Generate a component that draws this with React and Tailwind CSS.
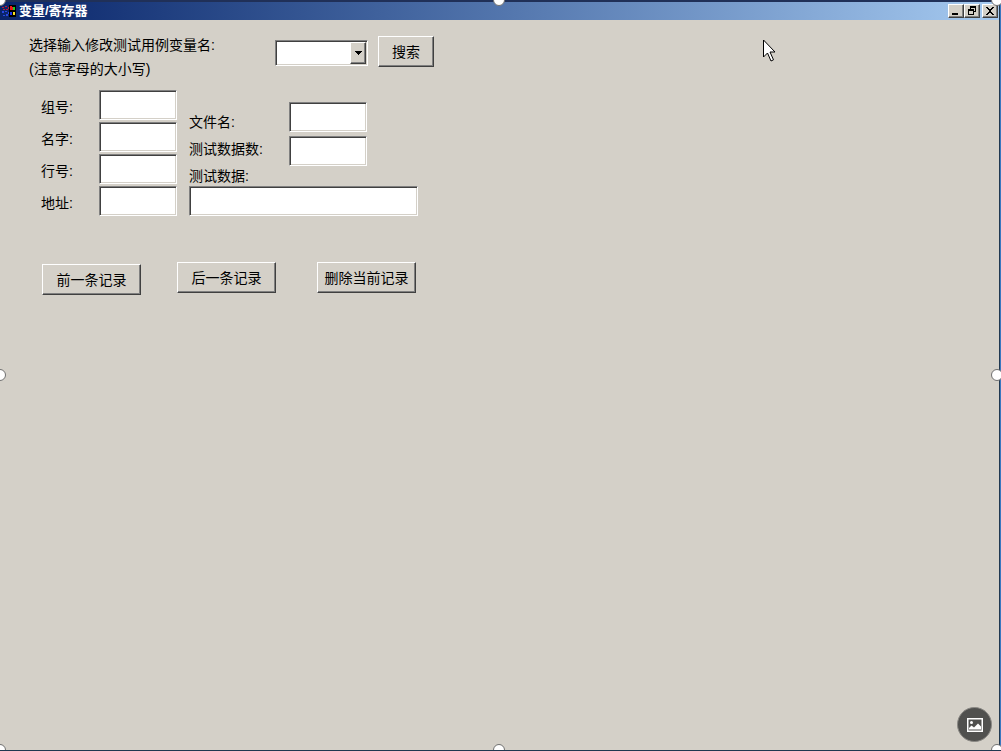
import React, { useState } from 'react';

const RAISED = 'bg-[#d4d0c8] border border-t-white border-l-white border-r-[#404040] border-b-[#404040] shadow-[inset_-1px_-1px_0_#808080]';
const SUNKEN = 'bg-white border border-t-[#808080] border-l-[#808080] border-r-white border-b-white shadow-[inset_1px_1px_0_#404040,inset_-1px_-1px_0_#d4d0c8] outline-none';

const HANDLES = [
  'left-0 top-0',
  'left-[calc(50%-2px)] top-0',
  'left-[calc(100%-4px)] top-0',
  'left-0 top-1/2',
  'left-[calc(50%-2px)] top-full',
  'left-[calc(100%-4px)] top-1/2',
  'left-0 top-full',
  'left-[calc(100%-4px)] top-full',
];

const RECORD_FIELDS = [
  { id: 'group', label: '组号:' },
  { id: 'name', label: '名字:' },
  { id: 'line', label: '行号:' },
  { id: 'address', label: '地址:' },
];

const AppIcon = () => (
  <svg width="16" height="14" viewBox="0 0 16 14" shapeRendering="crispEdges" aria-hidden="true">
    <path d="M9 1h7v12H9z" fill="#000" />
    <path d="M10 2h2v1h1v3h-3z" fill="#f01818" />
    <path d="M13 3h2v3h-2z" fill="#18d028" />
    <path d="M10 8h2v3h-2z" fill="#2038f0" />
    <path d="M13 8h2v3h-2z" fill="#f8e020" />
    <path d="M2 3h2v1H2zM5 2h2v1H5zM8 3h1v2H8zM3 5h2v1H3zM6 5h2v1H6z" fill="#c01830" />
    <path d="M2 7h2v2H2zM5 7h2v1H5zM8 8h1v2H8zM3 11h2v1H3zM6 10h2v2H6z" fill="#2848e0" />
  </svg>
);

const CaptionButton = ({ label, className = '', children }) => (
  <button type="button" aria-label={label} className={`flex h-[14px] w-4 items-center justify-center ${RAISED} ${className}`}>
    <svg width="10" height="10" viewBox="0 0 10 10" shapeRendering="crispEdges">
      {children}
    </svg>
  </button>
);

const TitleBar = () => (
  <header className="flex h-5 items-center border-t-2 border-[#203058] bg-linear-to-r from-[#0a246a] to-[#a6caf0] pr-px">
    <AppIcon />
    <h1 className="ml-[3px] flex-1 text-[13px] font-bold text-white">变量/寄存器</h1>
    <CaptionButton label="最小化">
      <path d="M1 7h6v2H1z" fill="#000" />
    </CaptionButton>
    <CaptionButton label="还原">
      <path d="M3 0h6v6H7V5h1V2H4v1H3zM1 3h6v6H1zM2 5v3h4V5z" fill="#000" fillRule="evenodd" />
    </CaptionButton>
    <CaptionButton label="关闭" className="ml-[2px]">
      <path d="M1 1h2v1h1v1h2V2h1V1h2v1H8v1H7v1H6v2h1v1h1v1h1v1H7V8H6V7H4v1H3v1H1V8h1V7h1V6h1V4H3V3H2V2H1z" fill="#000" />
    </CaptionButton>
  </header>
);

const ActionButton = ({ className = '', children }) => (
  <button type="button" className={`h-[31px] w-[99px] ${RAISED} ${className}`}>
    {children}
  </button>
);

const Cursor = () => (
  <svg className="pointer-events-none absolute left-[763px] top-[39px]" width="13" height="24" viewBox="0 0 13 24" aria-hidden="true">
    <path d="M.5 1v17l4-4 3.5 8 2.5-1.2L7 13h5z" fill="#fff" stroke="#000" />
  </svg>
);

export default function App() {
  const [variable, setVariable] = useState('');

  return (
    <div className="relative flex min-h-screen flex-col overflow-hidden border-b border-[#203850] bg-[#3a78c0] pr-px font-['Liberation_Sans','Noto_Sans_CJK_SC',sans-serif] text-sm text-black">
      <div className="flex flex-1 flex-col border-r border-[#203850] bg-[#d4d0c8]">
        <TitleBar />

        <main className="flex-1">
          <form className="pl-[29px] pt-[13px]" onSubmit={(e) => e.preventDefault()}>
            <div className="flex items-start">
              <label htmlFor="variable" className="w-[246px] leading-6">
                选择输入修改测试用例变量名:
                <br />
                (注意字母的大小写)
              </label>
              <div className="relative mt-[7px]">
                <select
                  id="variable"
                  value={variable}
                  onChange={(e) => setVariable(e.target.value)}
                  className={`block h-[26px] w-[93px] appearance-none ${SUNKEN}`}
                >
                  <option value=""></option>
                </select>
                <span className={`pointer-events-none absolute inset-y-[2px] right-[2px] flex w-4 items-center justify-center ${RAISED}`}>
                  <svg width="7" height="4" viewBox="0 0 7 4" shapeRendering="crispEdges">
                    <path d="M0 0h7v1H6v1H5v1H4v1H3V3H2V2H1V1H0z" fill="#000" />
                  </svg>
                </span>
              </div>
              <button type="submit" className={`ml-[10px] mt-[3px] h-[31px] w-14 ${RAISED}`}>搜索</button>
            </div>

            <div className="mt-[9px] flex items-start pl-3">
              <div className="flex flex-col gap-[2px]">
                {RECORD_FIELDS.map((field) => (
                  <div key={field.id} className="flex items-center">
                    <label htmlFor={field.id} className="w-[58px] pt-1 leading-5">{field.label}</label>
                    <input id={field.id} type="text" className={`h-[30px] w-[78px] ${SUNKEN}`} />
                  </div>
                ))}
              </div>

              <div className="ml-3 pt-3">
                <div className="flex h-[84px] items-start">
                  <div className="flex w-[100px] flex-col gap-[7px] pt-[10px] leading-5">
                    <label htmlFor="file">文件名:</label>
                    <label htmlFor="count">测试数据数:</label>
                    <label htmlFor="data">测试数据:</label>
                  </div>
                  <div className="flex flex-col gap-1">
                    <input id="file" type="text" className={`h-[30px] w-[78px] ${SUNKEN}`} />
                    <input id="count" type="text" className={`h-[30px] w-[78px] ${SUNKEN}`} />
                  </div>
                </div>
                <input id="data" type="text" className={`block h-[30px] w-[229px] ${SUNKEN}`} />
              </div>
            </div>

            <div className="mt-[46px] flex items-start pl-[13px]">
              <ActionButton className="mt-[2px]">前一条记录</ActionButton>
              <ActionButton className="ml-9">后一条记录</ActionButton>
              <ActionButton className="ml-[41px]">删除当前记录</ActionButton>
            </div>
          </form>
        </main>
      </div>

      <Cursor />

      <button
        type="button"
        aria-label="查看图片"
        className="absolute bottom-2 right-[9px] flex size-[35px] items-center justify-center rounded-full border border-[#8a8884] bg-[#50504e]"
      >
        <svg width="16" height="14" viewBox="0 0 16 14">
          <path d="M0 0h16v14H0zM1.500 1.500v11h13v-11z" fill="#fff" fillRule="evenodd" />
          <circle cx="4.5" cy="4.5" r="1.5" fill="#fff" />
          <path d="M2 11.500V10l2.500-2.500L7 9.500l4-4 3 3v3z" fill="#fff" />
        </svg>
      </button>

      {/* selection handles */}
      {HANDLES.map((place) => (
        <span key={place} className={`absolute size-3 -translate-x-1/2 -translate-y-1/2 rounded-full border border-[#707070] bg-white ${place}`} />
      ))}
    </div>
  );
}
